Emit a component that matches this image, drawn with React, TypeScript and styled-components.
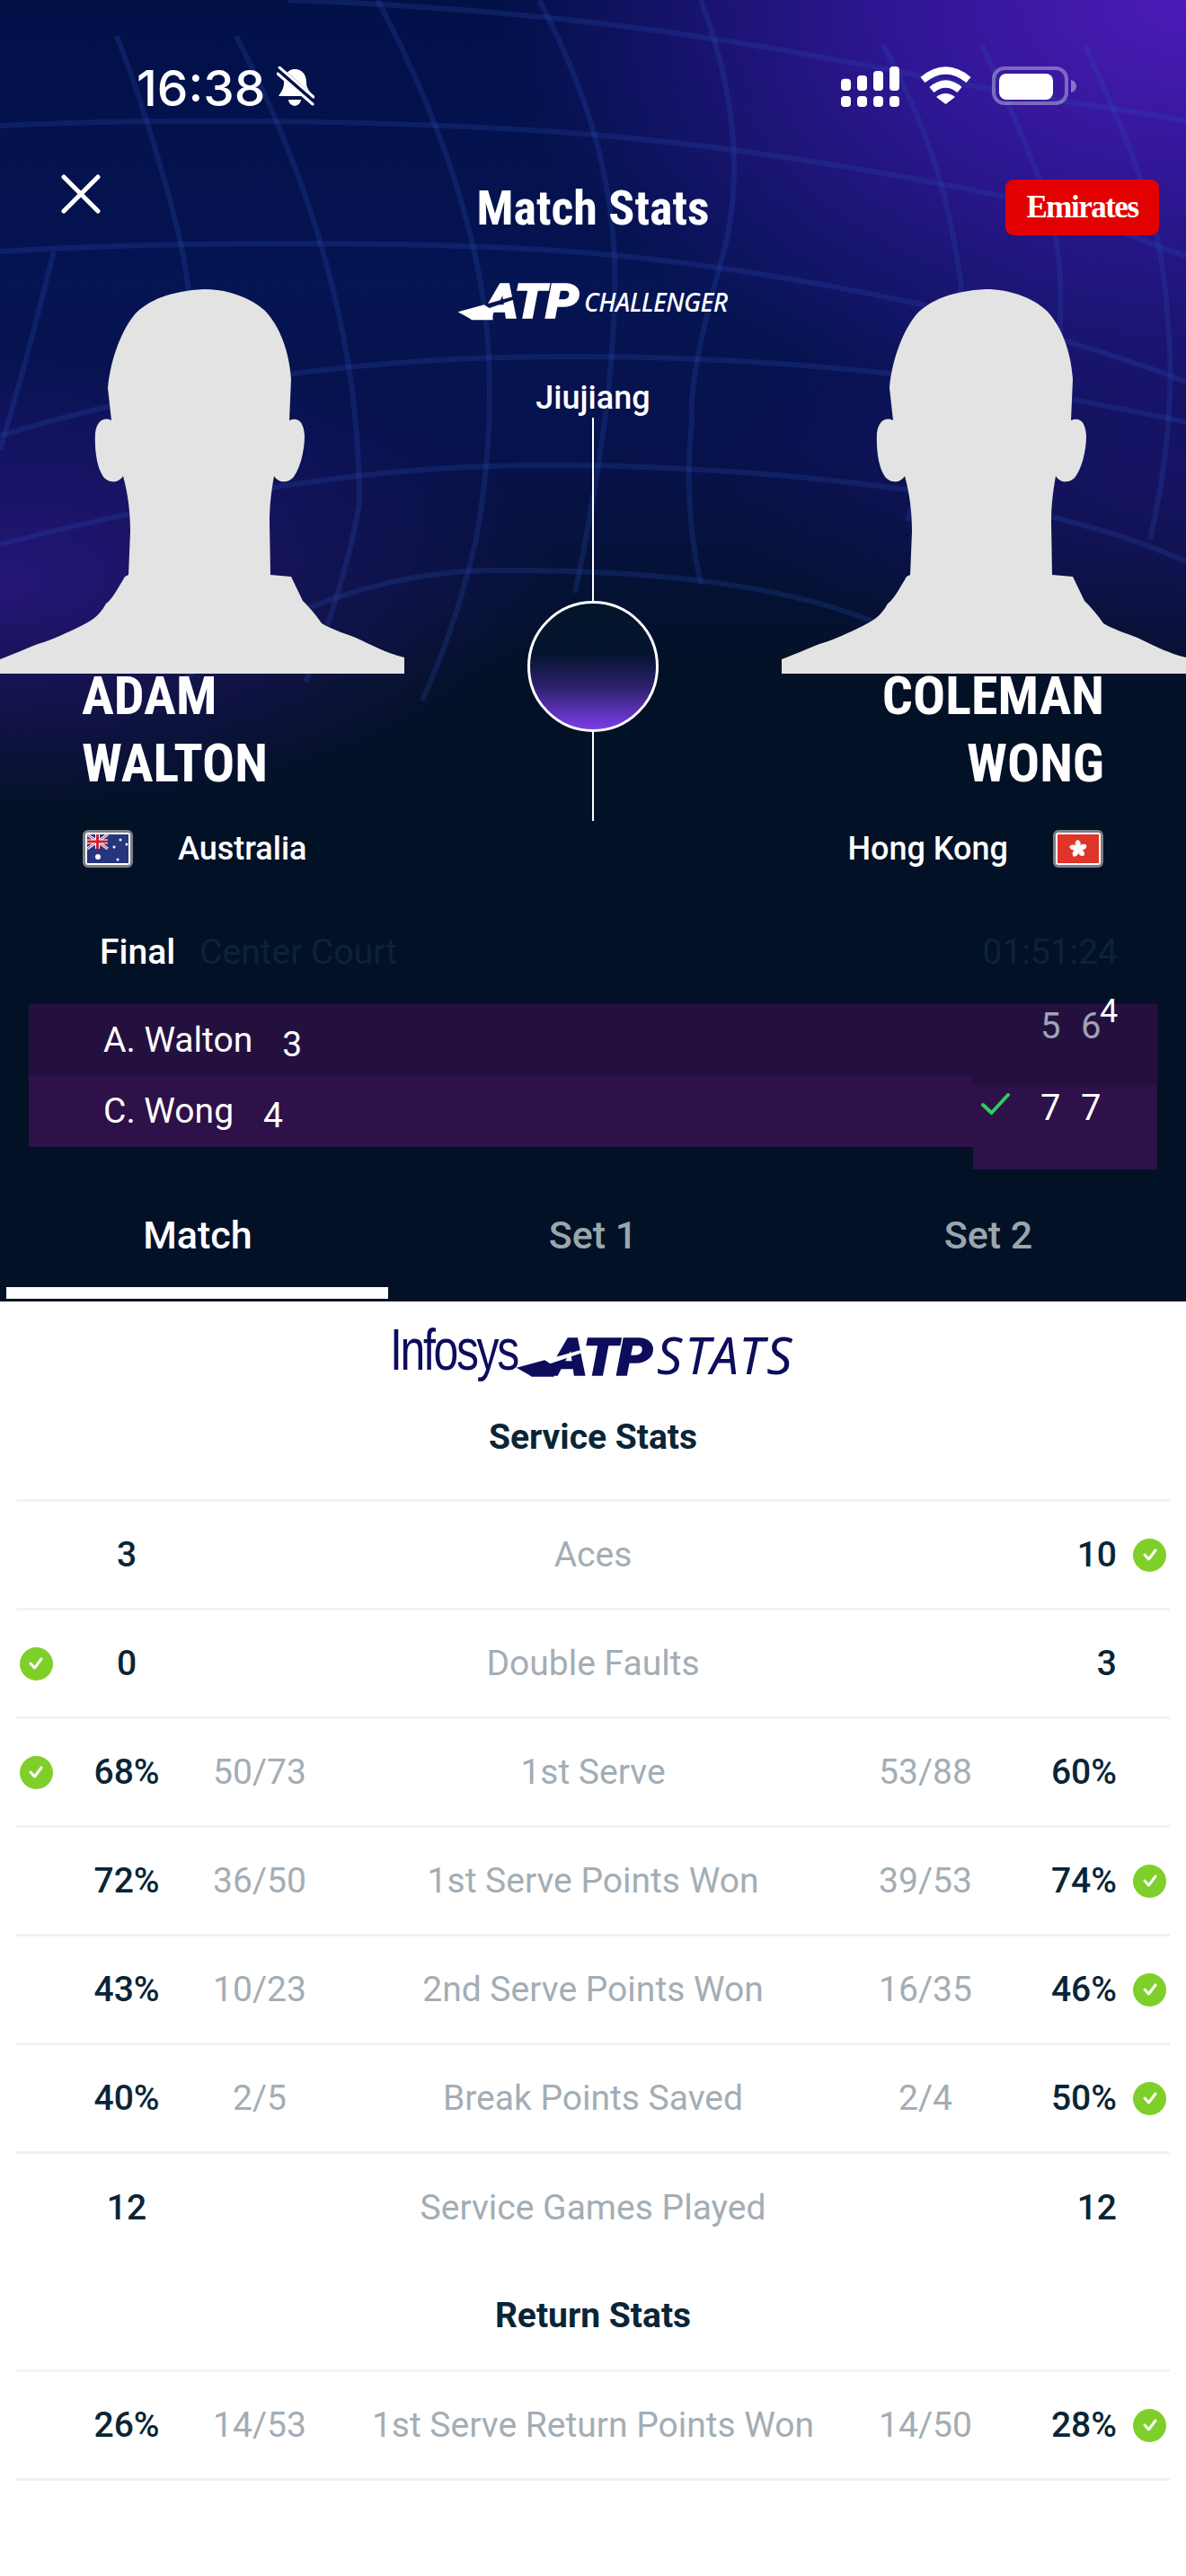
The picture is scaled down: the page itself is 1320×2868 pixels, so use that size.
import React from 'react';
import styled, { createGlobalStyle } from 'styled-components';

const GlobalStyle = createGlobalStyle`
  html, body {
    margin: 0;
    padding: 0;
    background: #fff;
    font-family: Roboto, "Liberation Sans", sans-serif;
  }
  * { box-sizing: border-box; }
`;

type Stat = {
  label: string;
  left: string;
  right: string;
  leftSub?: string;
  rightSub?: string;
  winner?: 'left' | 'right';
  noLine?: boolean;
};

const serviceStats: Stat[] = [
  { label: 'Aces', left: '3', right: '10', winner: 'right' },
  { label: 'Double Faults', left: '0', right: '3', winner: 'left' },
  { label: '1st Serve', left: '68%', right: '60%', leftSub: '50/73', rightSub: '53/88', winner: 'left' },
  { label: '1st Serve Points Won', left: '72%', right: '74%', leftSub: '36/50', rightSub: '39/53', winner: 'right' },
  { label: '2nd Serve Points Won', left: '43%', right: '46%', leftSub: '10/23', rightSub: '16/35', winner: 'right' },
  { label: 'Break Points Saved', left: '40%', right: '50%', leftSub: '2/5', rightSub: '2/4', winner: 'right' },
  { label: 'Service Games Played', left: '12', right: '12', noLine: true },
];

const returnStats: Stat[] = [
  { label: '1st Serve Return Points Won', left: '26%', right: '28%', leftSub: '14/53', rightSub: '14/50', winner: 'right' },
];

const GlobeLines = () => (
  <GlobeSvg viewBox="0 0 1320 900" fill="none" stroke="#2b50b4" strokeOpacity="0.24" strokeWidth="6">
    <path d="M320 0 C 600 10 800 40 1000 80 S 1240 118 1320 135" />
    <path d="M0 140 C 200 130 480 135 660 150 S 1000 195 1100 215 S 1260 265 1320 285" />
    <path d="M0 280 C 200 268 500 268 660 282 S 1100 340 1320 425" />
    <path d="M0 485 C 180 430 380 402 560 398 S 1000 400 1320 470" />
    <path d="M0 606 C 120 575 340 525 547 519 S 1120 535 1320 625" />
    <path d="M200 760 C 300 680 430 636 547 635 S 880 640 1010 710" />
    <path d="M130 40 Q 165 130 195 245 T 210 500 Q 205 600 170 720" />
    <path d="M263 40 Q 330 170 365 300 T 400 560 Q 385 650 340 760" />
    <path d="M420 0 Q 500 150 530 290 T 530 600 Q 510 690 470 780" />
    <path d="M600 0 Q 680 150 684 290 T 640 660" />
    <path d="M780 0 Q 840 160 803 290 T 770 470 Q 760 560 780 650" />
    <path d="M983 50 Q 1025 130 1043 190 T 1070 320 Q 1050 450 1010 580" />
    <path d="M1093 50 Q 1130 130 1157 200 T 1180 350 Q 1180 470 1140 600" />
    <path d="M1207 50 Q 1245 130 1270 200 T 1300 360 Q 1310 470 1280 600" />
    <path d="M60 280 Q 25 420 0 500" />
  </GlobeSvg>
);

const BellOff = () => (
  <svg width="42" height="46" viewBox="0 0 42 46">
    <path d="M20 3 C 29 3 33 10 33 18 C 33 25 37 27 40 33 L2 33 C 5 28 8 25 8 18 C 8 10 12 3 20 3 Z" fill="#fff" />
    <path d="M13 37 L27 37 C 26 46 14 46 13 37 Z" fill="#fff" />
    <path d="M1 3 L41 38" stroke="#021048" strokeWidth="9" />
    <path d="M3 1 L41 34" stroke="#fff" strokeWidth="3" strokeLinecap="round" />
    <path d="M1 8 L40 42" stroke="#fff" strokeWidth="3" strokeLinecap="round" />
  </svg>
);

const SignalIcon = () => (
  <svg width="65" height="45" viewBox="0 0 65 45" fill="#fff">
    <rect x="0" y="13.7" width="11" height="13.3" rx="4" />
    <rect x="18" y="10" width="11" height="17" rx="4" />
    <rect x="36" y="5" width="11" height="22" rx="4" />
    <rect x="54" y="0" width="11" height="27" rx="4" />
    <rect x="0" y="33" width="11" height="12" rx="4" />
    <rect x="18" y="33" width="11" height="12" rx="4" />
    <rect x="36" y="33" width="11" height="12" rx="4" />
    <rect x="54" y="33" width="11" height="12" rx="4" />
  </svg>
);

const WifiIcon = () => (
  <svg width="57" height="42" viewBox="0 0 57 42" fill="none" stroke="#fff" strokeWidth="8">
    <path d="M3 15 Q 28.5 -6 54 15" />
    <path d="M13 26 Q 28.5 13 44 26" />
    <path d="M18 34 Q 28.5 26 39 34 L 28.5 42 Z" fill="#fff" stroke="none" />
  </svg>
);

const BatteryIcon = () => (
  <svg width="94" height="44" viewBox="0 0 94 44">
    <rect x="2" y="2" width="81" height="39" rx="12" fill="none" stroke="#fff" strokeOpacity="0.35" strokeWidth="4" />
    <rect x="8" y="8" width="60" height="29" rx="8" fill="#fff" />
    <path d="M88 15 C 92 16 94 19 94 22 C 94 25 92 28 88 29 Z" fill="#fff" fillOpacity="0.4" />
  </svg>
);

const Silhouette = () => (
  <PortraitSvg viewBox="0 0 450 428">
    <path
      fill="#e3e3e3"
      d="M227 0 C 190 2 165 12 150 28 C 132 50 122 85 120 110 L124 146 C 116 142 108 146 106 160 C 105 180 108 200 116 210 C 122 216 132 216 137 208 C 143 230 145 250 145 270 L143 318 L139 320 C 130 335 125 345 118 350 C 110 365 100 370 90 375 C 75 382 60 390 42 395 C 25 402 10 408 0 412 L0 428 L450 428 L450 410 C 430 405 415 397 396 388 C 380 382 368 378 358 372 C 350 360 342 352 337 347 L324 320 L301 318 L300 260 C 300 240 302 225 305 208 C 310 216 320 216 326 210 C 334 200 339 180 339 163 C 338 148 332 142 322 146 L324 100 C 322 70 312 42 295 24 C 280 10 255 0 227 0 Z"
    />
  </PortraitSvg>
);

const AustraliaFlag = () => (
  <FlagBox>
    <svg width="46" height="32" viewBox="0 0 46 32">
      <rect width="46" height="32" fill="#27357e" />
      <path d="M0 0 L23 16 M23 0 L0 16" stroke="#fff" strokeWidth="3" />
      <path d="M0 0 L23 16 M23 0 L0 16" stroke="#d0203a" strokeWidth="1" />
      <path d="M11.5 0 V16 M0 8 H23" stroke="#fff" strokeWidth="5" />
      <path d="M11.5 0 V16 M0 8 H23" stroke="#d0203a" strokeWidth="3" />
      <circle cx="12" cy="25" r="3" fill="#fff" />
      <circle cx="30" cy="14" r="1.5" fill="#fff" />
      <circle cx="37" cy="6" r="1.5" fill="#fff" />
      <circle cx="44" cy="11" r="1.5" fill="#fff" />
      <circle cx="34" cy="28" r="1.5" fill="#fff" />
    </svg>
  </FlagBox>
);

const HongKongFlag = () => (
  <FlagBox>
    <svg width="46" height="32" viewBox="0 0 46 32">
      <rect width="46" height="32" fill="#e0342a" />
      {[0, 72, 144, 216, 288].map((deg) => (
        <path key={deg} d="M23 16 C 18.5 13 19 8 22 6 C 26.5 7 27 12 23 16 Z" fill="#fff" transform={`rotate(${deg} 23 16)`} />
      ))}
    </svg>
  </FlagBox>
);

const AtpMark = ({ color, cut, size, ml, mr }: { color: string; cut: string; size: number; ml: number; mr: number }) => (
  <AtpWrap $size={size} $color={color} $ml={ml} $mr={mr}>
    <svg viewBox="0 0 100 30" width={size * 1.1} height={size * 0.34} preserveAspectRatio="none">
      <polygon points="0,15 45,2 60,2 60,30 24,30 20,27" fill={color} />
      <polygon points="45,2 112,-18 112,-13 54,8" fill={cut} />
    </svg>
    ATP
  </AtpWrap>
);

const WinnerDot = () => (
  <Dot>
    <svg width="20" height="20" viewBox="0 0 20 20" fill="none">
      <path d="M4 10 L8.5 15 L16 5" stroke="#fff" strokeWidth="3" strokeLinecap="round" strokeLinejoin="round" />
    </svg>
  </Dot>
);

const StatRow = ({ stat }: { stat: Stat }) => (
  <Row $noLine={stat.noLine}>
    <DotCell>{stat.winner === 'left' && <WinnerDot />}</DotCell>
    <LeftValue>{stat.left}</LeftValue>
    <SubValue>{stat.leftSub}</SubValue>
    <RowLabel>{stat.label}</RowLabel>
    <SubValue>{stat.rightSub}</SubValue>
    <RightValue>{stat.right}</RightValue>
    <DotCell $right>{stat.winner === 'right' && <WinnerDot />}</DotCell>
  </Row>
);

export default function App() {
  return (
    <Page>
      <GlobalStyle />
      <Header>
        <GlobeLines />
        <StatusBar>
          <Clock>
            <Time>16:38</Time>
            <BellOff />
          </Clock>
          <StatusIcons>
            <SignalIcon />
            <WifiIcon />
            <BatteryIcon />
          </StatusIcons>
        </StatusBar>

        <NavBar>
          <CloseIcon viewBox="0 0 44 44" fill="none">
            <path d="M3 3 L41 41 M41 3 L3 41" stroke="#fff" strokeWidth="5" strokeLinecap="round" />
          </CloseIcon>
          <Title>Match Stats</Title>
          <Sponsor>Emirates</Sponsor>
        </NavBar>

        <Hero>
          <PlayerSide>
            <Silhouette />
            <PlayerName>ADAM<br />WALTON</PlayerName>
            <Country>
              <AustraliaFlag />
              <CountryName>Australia</CountryName>
            </Country>
          </PlayerSide>

          <Centre>
            <TourLogo>
              <AtpMark color="#fff" cut="#061550" size={54} ml={28} mr={9} />
              <Challenger>CHALLENGER</Challenger>
            </TourLogo>
            <City>Jiujiang</City>
            <VLine $height={204} />
            <Ball />
            <VLine $height={99} />
          </Centre>

          <PlayerSide $right>
            <Silhouette />
            <PlayerName $right>COLEMAN<br />WONG</PlayerName>
            <Country $right>
              <CountryName>Hong Kong</CountryName>
              <HongKongFlag />
            </Country>
          </PlayerSide>
        </Hero>

        <RoundRow>
          <RoundName>Final</RoundName>
          <Court>Center Court</Court>
          <Duration>01:51:24</Duration>
        </RoundRow>

        <ScoreBand>
          <Names>
            <NameRow $bg="#24103e">
              A. Walton<GameScore>3</GameScore>
            </NameRow>
            <NameRow $bg="#2d1148">
              C. Wong<GameScore>4</GameScore>
            </NameRow>
          </Names>
          <Sets>
            <SetRow $bg="#24103e" $h={90} $pad={5}>
              <SetCell $muted>5</SetCell>
              <SetCell $muted>6<Tiebreak>4</Tiebreak></SetCell>
            </SetRow>
            <SetRow $bg="#2d1148" $h={94} $pad={6}>
              <WinTick viewBox="0 0 32 24" fill="none">
                <path d="M2 13 L11.5 22 L30 2" stroke="#2ecc61" strokeWidth="4" strokeLinecap="round" strokeLinejoin="round" />
              </WinTick>
              <SetCell>7</SetCell>
              <SetCell>7</SetCell>
            </SetRow>
          </Sets>
        </ScoreBand>

        <Tabs>
          <Tab $active>Match</Tab>
          <Tab>Set 1</Tab>
          <Tab>Set 2</Tab>
        </Tabs>
      </Header>

      <Body>
        <Brand>
          <Infosys>Infosys</Infosys>
          <AtpMark color="#0d0d5c" cut="#fff" size={58} ml={37} mr={15} />
          <StatsWord>STATS</StatsWord>
        </Brand>
        <SectionTitle $gap={9}>Service Stats</SectionTitle>
        <StatList>
          {serviceStats.map((s) => (
            <StatRow key={s.label} stat={s} />
          ))}
        </StatList>
        <SectionTitle>Return Stats</SectionTitle>
        <StatList>
          {returnStats.map((s) => (
            <StatRow key={s.label} stat={s} />
          ))}
        </StatList>
      </Body>
    </Page>
  );
}

const Page = styled.div`
  width: 1320px;
  height: 2868px;
  overflow: hidden;
  background: #fff;
`;

const Header = styled.header`
  position: relative;
  height: 1449px;
  overflow: hidden;
  color: #fff;
  background:
    radial-gradient(ellipse 760px 480px at 100% 0, #4c1bb8 0%, rgba(60, 24, 170, 0.75) 45%, rgba(40, 20, 140, 0) 100%),
    radial-gradient(ellipse 620px 260px at 0 650px, rgba(56, 24, 160, 0.62) 0%, rgba(40, 20, 130, 0) 100%),
    radial-gradient(ellipse 520px 260px at 1320px 520px, rgba(40, 20, 130, 0.5) 0%, rgba(40, 20, 130, 0) 100%),
    linear-gradient(180deg, #021048 0%, #051452 320px, #07124c 500px, #031126 750px, #031126 100%);
`;

const GlobeSvg = styled.svg`
  position: absolute;
  left: 0;
  top: 0;
  width: 1320px;
  height: 900px;
`;

const StatusBar = styled.div`
  position: relative;
  display: flex;
  justify-content: space-between;
  height: 190px;
  padding: 74px 122px 0 152px;
`;

const Clock = styled.div`
  display: flex;
  align-items: flex-start;
  gap: 13px;
`;

const Time = styled.span`
  margin-top: 1px;
  font-family: Inter, Roboto, sans-serif;
  font-size: 55px;
  font-weight: 500;
  line-height: 46px;
`;

const StatusIcons = styled.div`
  display: flex;
  align-items: flex-start;
  gap: 23px;
`;

const NavBar = styled.div`
  position: relative;
  display: grid;
  grid-template-columns: 1fr auto 1fr;
  align-items: start;
  height: 127px;
  padding: 4px 30px 0;
`;

const CloseIcon = styled.svg`
  width: 48px;
  height: 44px;
  margin-left: 36px;
`;

const condensed = `
  font-stretch: 75%;
  font-family: "Roboto Condensed", Roboto, sans-serif;
`;

const Title = styled.h1`
  ${condensed}
  margin: 8px 0 0;
  font-size: 54px;
  font-weight: 700;
  line-height: 60px;
`;

const Sponsor = styled.div`
  justify-self: end;
  width: 171px;
  height: 62px;
  margin-top: 6px;
  border-radius: 9px;
  background: #e30000;
  color: #fff;
  font-family: "Liberation Serif", serif;
  font-size: 35px;
  font-weight: 700;
  line-height: 62px;
  letter-spacing: -1.5px;
  text-align: center;
`;

const Hero = styled.div`
  position: relative;
  display: grid;
  grid-template-columns: 450px 1fr 450px;
`;

const PlayerSide = styled.div<{ $right?: boolean }>`
  display: flex;
  flex-direction: column;
  padding-top: 5px;
  align-items: ${(p) => (p.$right ? 'flex-end' : 'flex-start')};
`;

const PortraitSvg = styled.svg`
  display: block;
  width: 450px;
  height: 428px;
`;

const PlayerName = styled.div<{ $right?: boolean }>`
  ${condensed}
  margin-top: -13px;
  padding: ${(p) => (p.$right ? '0 91px 0 0' : '0 0 0 91px')};
  font-size: 60px;
  font-weight: 700;
  line-height: 75px;
  text-align: ${(p) => (p.$right ? 'right' : 'left')};
`;

const Country = styled.div<{ $right?: boolean }>`
  display: flex;
  align-items: center;
  gap: 50px;
  margin-top: 37px;
  padding: ${(p) => (p.$right ? '0 92px 0 0' : '0 0 0 92px')};
`;

const CountryName = styled.span`
  font-size: 36px;
  font-weight: 500;
  line-height: 42px;
`;

const FlagBox = styled.div`
  width: 56px;
  height: 42px;
  padding: 2px;
  border: 3px solid #7b7f85;
  border-radius: 6px;
  background: #fff;
  overflow: hidden;
  svg { display: block; }
`;

const Centre = styled.div`
  display: flex;
  flex-direction: column;
  align-items: center;
`;

const TourLogo = styled.div`
  display: flex;
  align-items: center;
  gap: 6px;
  height: 38px;
`;

const AtpWrap = styled.div<{ $size: number; $color: string; $ml: number; $mr: number }>`
  position: relative;
  flex: none;
  margin: 0 ${(p) => p.$mr}px 0 ${(p) => p.$ml}px;
  color: ${(p) => p.$color};
  font-family: Roboto, sans-serif;
  font-size: ${(p) => p.$size}px;
  font-style: italic;
  font-weight: 900;
  line-height: 1;
  letter-spacing: -1px;
  -webkit-text-stroke: 1.5px ${(p) => p.$color};
  transform: scaleX(1.09);
  transform-origin: left;
  svg {
    position: absolute;
    left: ${(p) => -p.$ml / 1.09}px;
    bottom: ${(p) => p.$size * 0.13}px;
    overflow: visible;
  }
`;

const Challenger = styled.span`
  font-family: "Noto Sans", sans-serif;
  font-size: 28px;
  font-style: italic;
  font-weight: 500;
  letter-spacing: -0.5px;
`;

const City = styled.div`
  margin-top: 66px;
  font-size: 36px;
  font-weight: 500;
  line-height: 44px;
`;

const VLine = styled.div<{ $height: number }>`
  width: 2px;
  height: ${(p) => p.$height}px;
  background: #fff;
`;

const Ball = styled.div`
  flex: none;
  width: 146px;
  height: 146px;
  border: 3px solid #fff;
  border-radius: 50%;
  background: linear-gradient(180deg, #03152b 0%, #04142e 40%, #2a2168 65%, #7c3de8 100%);
`;

const RoundRow = styled.div`
  position: relative;
  display: flex;
  align-items: center;
  height: 60px;
  margin-top: 64px;
  padding: 0 76px 0 111px;
  font-size: 39px;
  line-height: 44px;
`;

const RoundName = styled.span`
  font-weight: 500;
`;

const Court = styled.span`
  margin-left: 27px;
  color: #0a2338;
`;

const Duration = styled.span`
  margin-left: auto;
  color: #0a2338;
`;

const ScoreBand = styled.div`
  position: relative;
  display: grid;
  grid-template-columns: 1051px 205px;
  align-items: start;
  margin: 28px 32px 0;
  font-size: 39px;
`;

const Names = styled.div`
  display: flex;
  flex-direction: column;
`;

const NameRow = styled.div<{ $bg: string }>`
  display: flex;
  align-items: center;
  gap: 33px;
  height: 79.5px;
  padding-left: 83px;
  background: ${(p) => p.$bg};
  line-height: 46px;
`;

const GameScore = styled.span`
  padding-top: 10px;
`;

const Sets = styled.div`
  display: flex;
  flex-direction: column;
`;

const SetRow = styled.div<{ $bg: string; $h: number; $pad: number }>`
  position: relative;
  display: flex;
  height: ${(p) => p.$h}px;
  padding: ${(p) => p.$pad}px 0 0 75px;
  background: ${(p) => p.$bg};
`;

const SetCell = styled.span<{ $muted?: boolean }>`
  position: relative;
  width: 45px;
  color: ${(p) => (p.$muted ? '#9ea4b4' : '#fff')};
  font-size: 40px;
  line-height: 40px;
`;

const Tiebreak = styled.span`
  position: absolute;
  left: 21px;
  top: -15px;
  color: #fff;
  font-size: 36px;
  line-height: 36px;
`;

const WinTick = styled.svg`
  position: absolute;
  left: 9px;
  top: 9px;
  width: 32px;
  height: 24px;
`;

const Tabs = styled.div`
  position: relative;
  display: grid;
  grid-template-columns: repeat(3, 1fr);
  height: 147px;
`;

const Tab = styled.div<{ $active?: boolean }>`
  position: relative;
  padding-top: 50px;
  color: ${(p) => (p.$active ? '#fff' : '#9aa5ae')};
  font-size: 43px;
  font-weight: 500;
  line-height: 46px;
  text-align: center;
  &::after {
    content: '';
    display: ${(p) => (p.$active ? 'block' : 'none')};
    position: absolute;
    left: 7px;
    right: 8px;
    bottom: 3px;
    height: 13px;
    background: #fff;
  }
`;

const Body = styled.main`
  background: #fff;
`;

const Brand = styled.div`
  display: flex;
  align-items: flex-end;
  height: 91px;
  padding-left: 434px;
`;

const Infosys = styled.span`
  flex: none;
  width: 141px;
  color: #0d0d5c;
  font-family: "Liberation Sans", sans-serif;
  font-size: 64px;
  line-height: 74px;
  letter-spacing: -3px;
  transform: scaleX(0.78);
  transform-origin: left;
`;

const StatsWord = styled.span`
  flex: none;
  color: #0d0d5c;
  font-family: "Noto Sans", sans-serif;
  font-size: 56px;
  font-style: italic;
  line-height: 64px;
  letter-spacing: 3px;
`;

const SectionTitle = styled.h2<{ $gap?: number }>`
  display: flex;
  align-items: center;
  justify-content: center;
  height: 120px;
  margin: 0 0 ${(p) => p.$gap ?? 0}px;
  color: #0a2536;
  font-size: 39px;
  font-weight: 700;
`;

const StatList = styled.div`
  margin: 0 18px;
  border-top: 3px solid #f1f2f3;
`;

const Row = styled.div<{ $noLine?: boolean }>`
  display: grid;
  grid-template-columns: 44px 158px 138px 1fr 136px 145px 59px;
  align-items: center;
  height: ${(p) => (p.$noLine ? '120px' : '121px')};
  border-bottom: ${(p) => (p.$noLine ? 'none' : '3px solid #f1f2f3')};
  font-size: 39px;
`;

const DotCell = styled.div<{ $right?: boolean }>`
  display: flex;
  justify-content: ${(p) => (p.$right ? 'flex-end' : 'center')};
  padding-right: ${(p) => (p.$right ? '4px' : '0')};
`;

const Dot = styled.span`
  display: flex;
  align-items: center;
  justify-content: center;
  width: 37px;
  height: 37px;
  border-radius: 50%;
  background: #7fcf2a;
`;

const LeftValue = styled.div`
  color: #0a2536;
  font-weight: 500;
  text-align: center;
`;

const RightValue = styled.div`
  color: #0a2536;
  font-weight: 500;
  text-align: right;
`;

const SubValue = styled.div`
  color: #a3adb5;
  text-align: center;
`;

const RowLabel = styled.div`
  color: #a3adb5;
  text-align: center;
`;
